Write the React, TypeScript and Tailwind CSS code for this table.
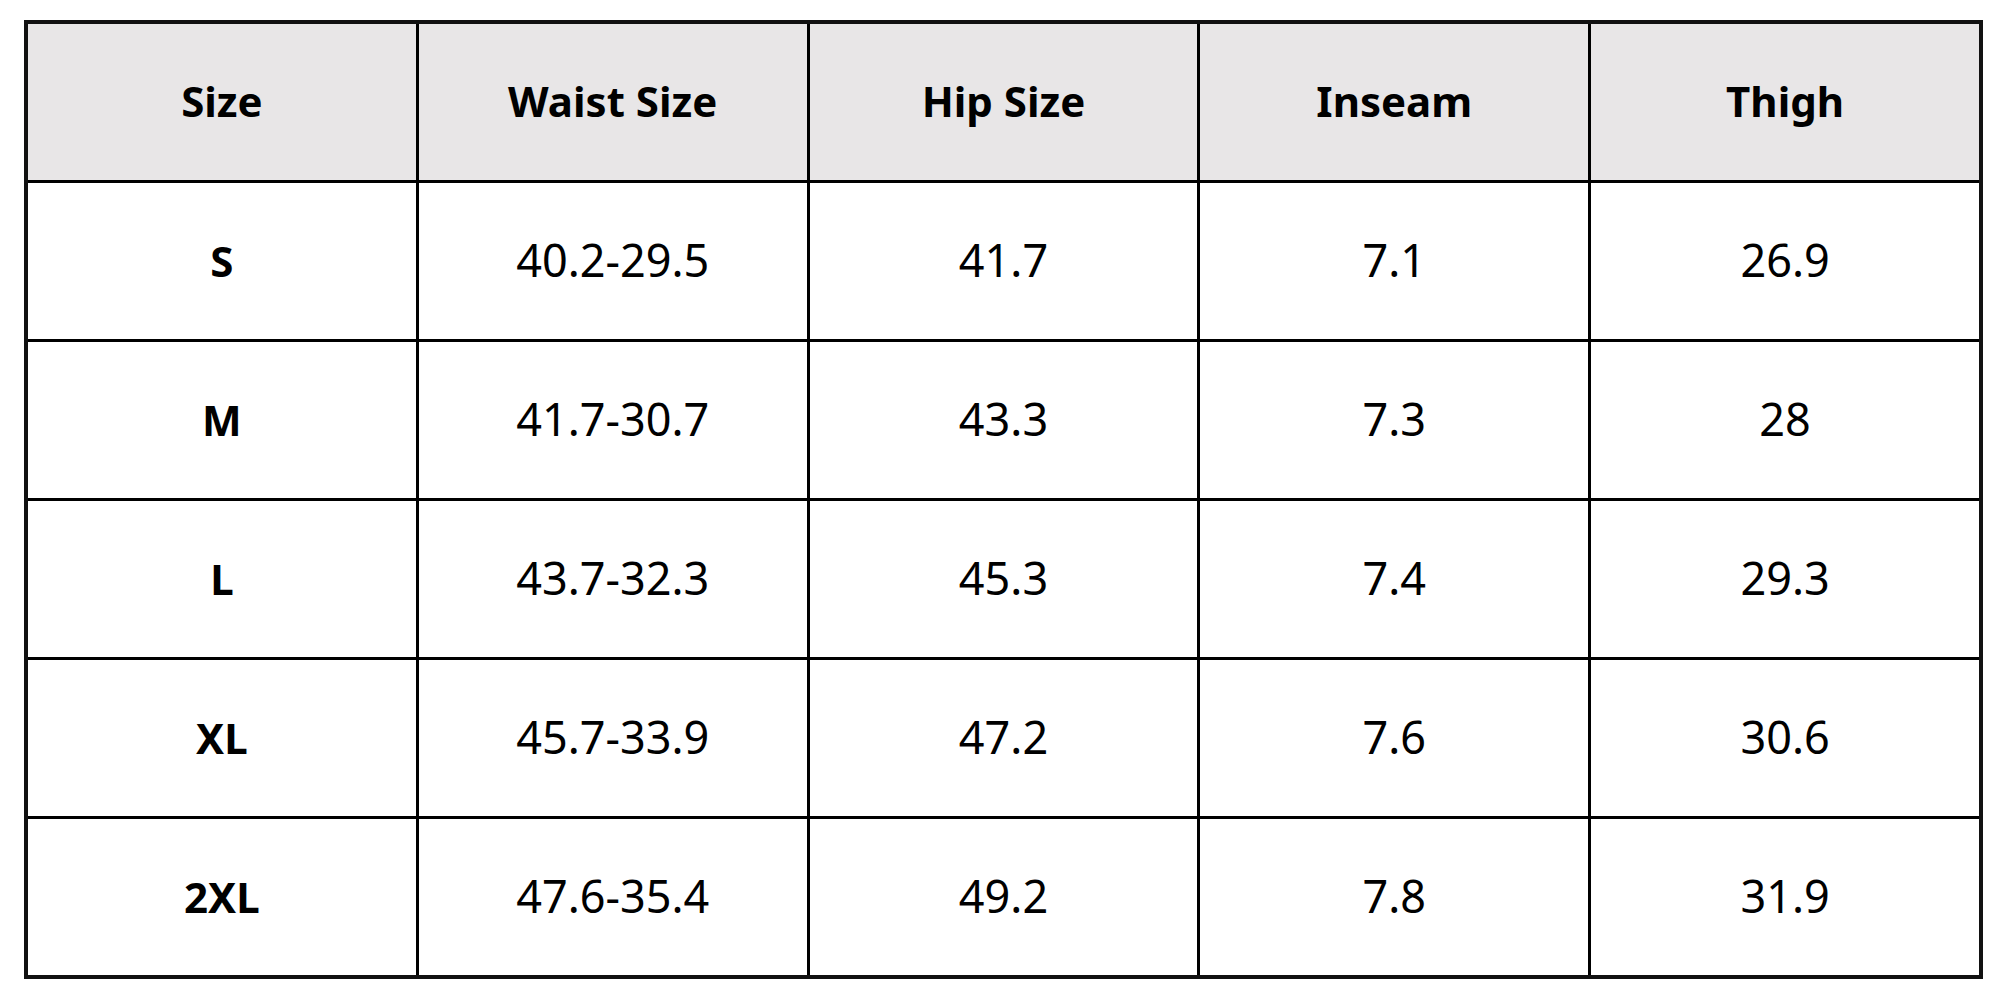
import React from 'react';

const headers = ['Size', 'Waist Size', 'Hip Size', 'Inseam', 'Thigh'];

const rows = [
  ['S', '40.2-29.5', '41.7', '7.1', '26.9'],
  ['M', '41.7-30.7', '43.3', '7.3', '28'],
  ['L', '43.7-32.3', '45.3', '7.4', '29.3'],
  ['XL', '45.7-33.9', '47.2', '7.6', '30.6'],
  ['2XL', '47.6-35.4', '49.2', '7.8', '31.9'],
];

export default function App() {
  return (
    <div className="w-[2000px] h-[1000px] bg-white pt-[20px] pl-[24px] font-['Noto_Sans',sans-serif] text-black">
      {/* Size chart */}
      <div className="w-[1959px] h-[959px] border-[4px] border-[#111] bg-black grid grid-cols-5 grid-rows-6 gap-[3px]">
        {headers.map((h) => (
          <div key={h} className="bg-[#e8e6e7] flex items-center justify-center pb-[4px] text-[42px] font-bold">
            {h}
          </div>
        ))}
        {rows.map((row, i) =>
          row.map((cell, j) => (
            <div
              key={`${i}-${j}`}
              className={`bg-white flex items-center justify-center pb-[2px] ${j === 0 ? 'text-[42px] font-bold' : 'text-[45px] font-normal'}`}
            >
              {cell}
            </div>
          ))
        )}
      </div>
    </div>
  );
}
